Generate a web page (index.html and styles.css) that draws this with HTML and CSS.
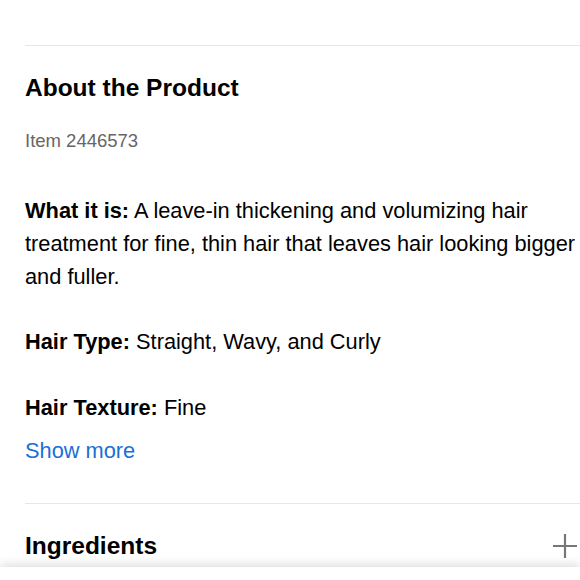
FILE: index.html
```html
<!DOCTYPE html>
<html>
<head>
<meta charset="utf-8">
<link rel="stylesheet" href="styles.css">
</head>
<body>
<main class="page">
  <section class="about">
    <h2 class="title">About the Product</h2>
    <p class="item">Item 2446573</p>
    <p class="para"><b>What it is:</b> A leave-in thickening and volumizing hair treatment for fine, thin hair that leaves hair looking bigger and fuller.</p>
    <p class="para"><b>Hair Type:</b> Straight, Wavy, and Curly</p>
    <p class="para last"><b>Hair Texture:</b> Fine</p>
    <a class="more" href="#">Show more</a>
  </section>
  <section class="acc">
    <h2 class="title">Ingredients</h2>
    <svg class="plus" width="26" height="26" viewBox="0 0 26 26"><path d="M13 1v24M1 13h24" stroke="#777" stroke-width="2.2" fill="none"/></svg>
  </section>
</main>
<div class="bottombar"></div>
</body>
</html>
```
FILE: styles.css
```css
html, body { margin: 0; padding: 0; background: #fff; }
body {
  font-family: "Liberation Sans", Arial, Helvetica, sans-serif;
  color: #000;
  overflow: hidden;
}
.page { padding: 45px 0 0 25px; }
.about {
  border-top: 1px solid #e6e6e6;
  display: flex;
  flex-direction: column;
  padding-bottom: 36px;
}
.title {
  margin: 0;
  font-size: 24.5px;
  line-height: 30px;
  font-weight: bold;
}
.about .title { margin-top: 27px; }
.item {
  margin: 26px 0 0;
  font-size: 18.5px;
  line-height: 24px;
  color: #666;
}
.para {
  margin: 41px 0 0;
  font-size: 21.8px;
  line-height: 33px;
}
.para + .para { margin-top: 32px; }
.para.last { margin-top: 33px; }
.more {
  margin-top: 10px;
  font-size: 21.8px;
  line-height: 33px;
  color: #1b6fd6;
  text-decoration: none;
  align-self: flex-start;
}
.acc {
  border-top: 1px solid #e6e6e6;
  display: flex;
  align-items: center;
  justify-content: space-between;
  padding: 27px 2px 0 0;
}
.plus { display: block; }
.bottombar {
  position: fixed;
  left: 0; right: 0; bottom: 0;
  height: 13px;
  background: #fff;
  box-shadow: 0 -3px 10px rgba(0,0,0,0.13);
}
```
